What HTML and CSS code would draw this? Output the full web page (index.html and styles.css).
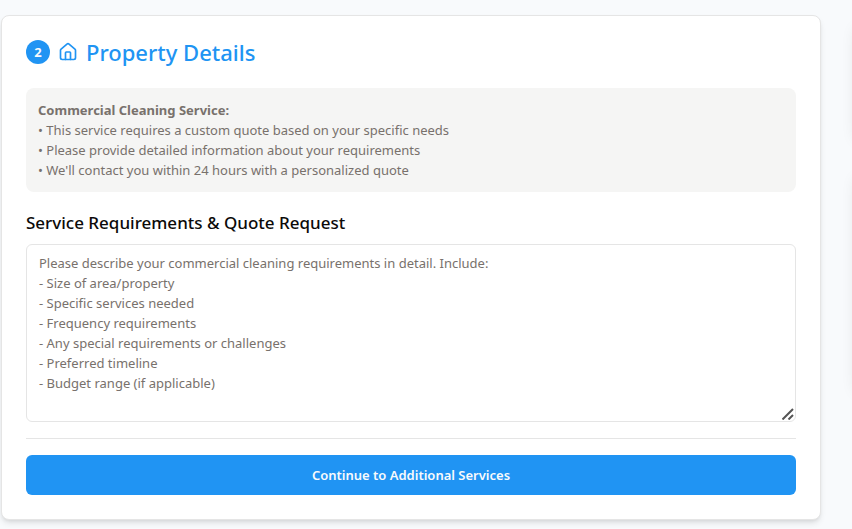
FILE: index.html
```html
<!DOCTYPE html>
<html lang="en">
<head>
<meta charset="utf-8">
<meta name="viewport" content="width=device-width, initial-scale=1">
<title>Property Details</title>
<link rel="stylesheet" href="styles.css">
</head>
<body>
<div class="page">
  <main class="card">
    <header class="card-header">
      <span class="step">2</span>
      <svg class="home" viewBox="0 0 24 24" fill="none" stroke="currentColor" stroke-width="2" stroke-linecap="round" stroke-linejoin="round" aria-hidden="true">
        <path d="M15 21v-8a1 1 0 0 0-1-1h-4a1 1 0 0 0-1 1v8"/>
        <path d="M3 10a2 2 0 0 1 .709-1.528l7-5.999a2 2 0 0 1 2.582 0l7 5.999A2 2 0 0 1 21 10v9a2 2 0 0 1-2 2H5a2 2 0 0 1-2-2z"/>
      </svg>
      <h1 class="title">Property Details</h1>
    </header>
    <form class="form">
      <div class="notice">
        <strong>Commercial Cleaning Service:</strong>
        <p>• This service requires a custom quote based on your specific needs</p>
        <p>• Please provide detailed information about your requirements</p>
        <p>• We'll contact you within 24 hours with a personalized quote</p>
      </div>
      <div class="field">
        <label class="label" for="requirements">Service Requirements &amp; Quote Request</label>
        <div class="textarea-wrap">
          <textarea class="textarea" id="requirements" rows="8" placeholder="Please describe your commercial cleaning requirements in detail. Include:
- Size of area/property
- Specific services needed
- Frequency requirements
- Any special requirements or challenges
- Preferred timeline
- Budget range (if applicable)"></textarea>
          <svg class="grip" viewBox="0 0 12 12" fill="none" stroke="#555" stroke-width="2" aria-hidden="true">
            <path d="M0.5 11.5 11 1M6.5 11.5 11 7"/>
          </svg>
        </div>
      </div>
      <div class="actions">
        <button class="button" type="button">Continue to Additional Services</button>
      </div>
    </form>
  </main>
  <aside class="sidebar">
    <div class="panel panel-short"></div>
    <div class="panel panel-tall"></div>
  </aside>
</div>
</body>
</html>
```
FILE: styles.css
```css
* {
  box-sizing: border-box;
}

body {
  margin: 0;
  background: #f8fafc;
  color: #0c0a09;
  font-family: "Segoe UI", "Noto Sans", sans-serif;
  font-size: 13px;
  line-height: 20px;
}

h1,
p {
  margin: 0;
}

.page {
  display: flex;
  align-items: flex-start;
  gap: 32px;
  padding: 15px 0 8px 1px;
  overflow: hidden;
}

.card {
  flex: 1;
  min-width: 0;
  padding: 24px;
  background: #fff;
  border: 1px solid #e5e5e5;
  border-radius: 8px;
  box-shadow: 0 4px 6px -1px rgba(0, 0, 0, 0.1), 0 2px 4px -2px rgba(0, 0, 0, 0.1);
}

/* The sidebar starts at the right edge of the window. */
.sidebar {
  display: grid;
  flex: none;
  gap: 32px;
  width: 32px;
  margin-right: -33px;
}

.panel {
  background: #fff;
  border-radius: 8px;
  box-shadow: 0 10px 15px -3px rgba(0, 0, 0, 0.1);
}

.panel-short {
  height: 118px;
}

.panel-tall {
  height: 220px;
}

.card-header {
  display: flex;
  align-items: center;
  gap: 8px;
  height: 24px;
  margin-bottom: 24px;
  color: #2094f3;
}

.step {
  display: flex;
  align-items: center;
  justify-content: center;
  width: 24px;
  height: 24px;
  border-radius: 50%;
  background: #2094f3;
  color: #f8fafc;
  font-weight: 700;
}

.home {
  width: 20px;
  height: 20px;
}

.title {
  font-size: 22px;
  font-weight: 500;
  line-height: 24px;
}

.form {
  display: grid;
  gap: 16px;
}

.notice {
  padding: 12px;
  border-radius: 8px;
  background: #f5f5f4;
  color: #78716c;
}

.notice strong {
  font-weight: 700;
}

.field {
  display: grid;
  gap: 9px;
  padding-top: 3px;
}

.label {
  font-size: 17px;
  font-weight: 500;
  line-height: 24px;
}

.textarea-wrap {
  position: relative;
}

.textarea {
  display: block;
  width: 100%;
  height: 178px;
  padding: 8px 12px;
  border: 1px solid #e5e5e5;
  border-radius: 6px;
  background: #fff;
  color: inherit;
  font: inherit;
  resize: vertical;
}

.textarea::placeholder {
  color: #78716c;
  opacity: 1;
}

.textarea::-webkit-resizer {
  background: transparent;
}

.grip {
  position: absolute;
  right: 2px;
  bottom: 2px;
  width: 12px;
  height: 12px;
  pointer-events: none;
}

.actions {
  padding-top: 16px;
  border-top: 1px solid #e5e5e5;
}

.button {
  display: block;
  width: 100%;
  height: 40px;
  border: 0;
  border-radius: 6px;
  background: #2094f3;
  color: #f8fafc;
  font: inherit;
  font-weight: 600;
}
```
